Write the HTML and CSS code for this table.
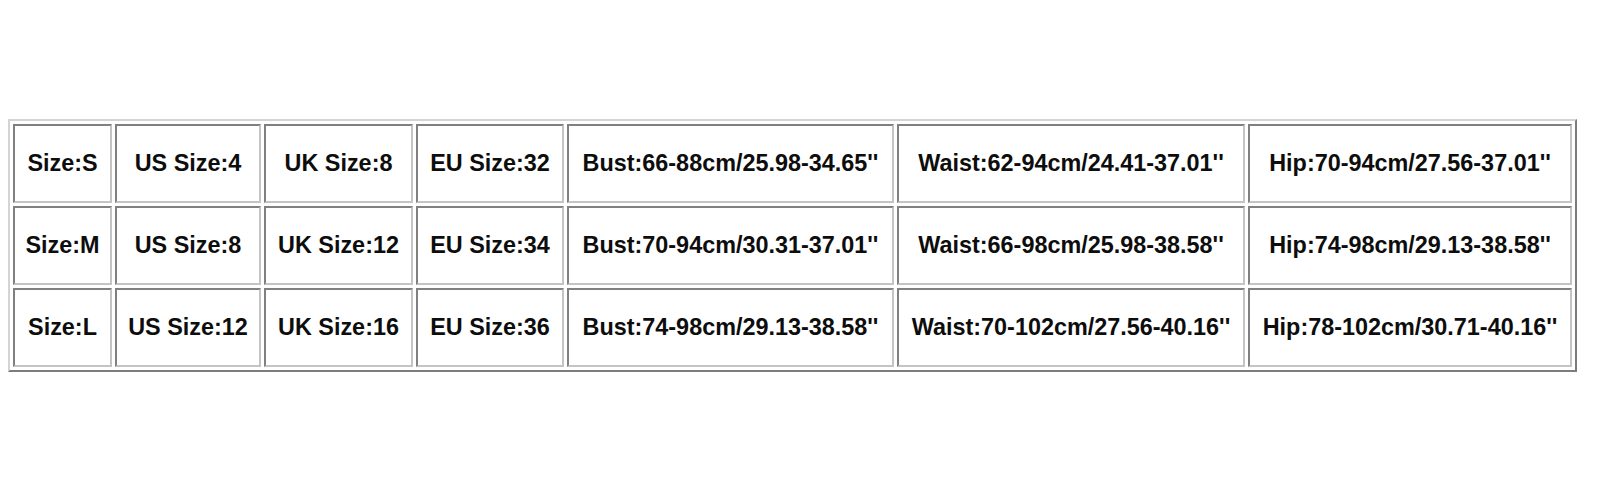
FILE: index.html
```html
<!DOCTYPE html>
<html>
<head>
<meta charset="utf-8">
<title>Size chart</title>
<link rel="stylesheet" href="styles.css">
</head>
<body>
<div class="page">
  <div class="chart" role="table">
    <div class="cell">Size:S</div>
    <div class="cell">US Size:4</div>
    <div class="cell">UK Size:8</div>
    <div class="cell">EU Size:32</div>
    <div class="cell">Bust:66-88cm/25.98-34.65''</div>
    <div class="cell">Waist:62-94cm/24.41-37.01''</div>
    <div class="cell">Hip:70-94cm/27.56-37.01''</div>

    <div class="cell">Size:M</div>
    <div class="cell">US Size:8</div>
    <div class="cell">UK Size:12</div>
    <div class="cell">EU Size:34</div>
    <div class="cell">Bust:70-94cm/30.31-37.01''</div>
    <div class="cell">Waist:66-98cm/25.98-38.58''</div>
    <div class="cell">Hip:74-98cm/29.13-38.58''</div>

    <div class="cell">Size:L</div>
    <div class="cell">US Size:12</div>
    <div class="cell">UK Size:16</div>
    <div class="cell">EU Size:36</div>
    <div class="cell">Bust:74-98cm/29.13-38.58''</div>
    <div class="cell">Waist:70-102cm/27.56-40.16''</div>
    <div class="cell">Hip:78-102cm/30.71-40.16''</div>
  </div>
</div>
</body>
</html>
```

FILE: styles.css
```css
html, body {
  margin: 0;
  padding: 0;
  background: #ffffff;
}

.page {
  padding: 119px 0 0 8px;
}

.chart {
  display: inline-grid;
  grid-template-columns: 99px 146px 149px 148px 327px 348px 324px;
  grid-auto-rows: 79px;
  gap: 3px;
  padding: 3px;
  border: 2px solid;
  border-color: #d4d4d4 #7c7c7c #7c7c7c #d4d4d4;
  background: #ffffff;
}

.cell {
  box-sizing: border-box;
  display: flex;
  align-items: center;
  justify-content: center;
  border: 2px solid;
  border-color: #808080 #c4c4c4 #c4c4c4 #808080;
  font-family: "Liberation Sans", Arial, sans-serif;
  font-weight: bold;
  font-size: 23.4px;
  color: #0d0d0d;
  white-space: nowrap;
}
```
